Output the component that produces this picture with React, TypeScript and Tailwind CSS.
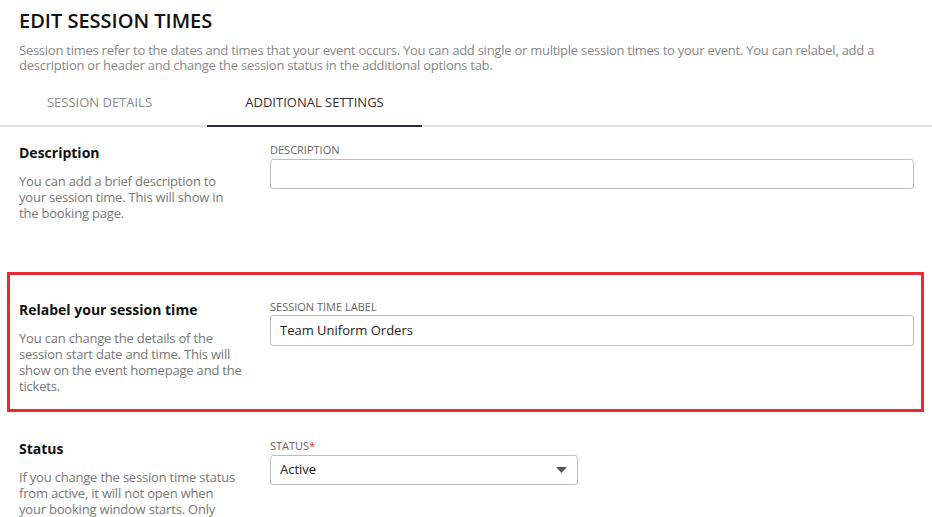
import React from 'react';

const font = { fontFamily: '"Open Sans", "Noto Sans", sans-serif' };

const SectionRow: React.FC<{ title: string; text: string; children: React.ReactNode }> = ({ title, text, children }) => (
  <div className="grid grid-cols-[232px_1fr] gap-x-[19px]">
    <div>
      <h2 className="text-[14px] font-bold leading-[20px] text-[#111]">{title}</h2>
      <p className="mt-[10px] max-w-[223px] text-[13px] leading-[16px] tracking-[-0.2px] text-[#777]">{text}</p>
    </div>
    <div>{children}</div>
  </div>
);

const FieldLabel: React.FC<{ children: React.ReactNode }> = ({ children }) => (
  <div className="text-[11px] leading-[14px] text-[#666] uppercase">{children}</div>
);

const App: React.FC = () => {
  return (
    <div className="w-[932px] h-[517px] overflow-hidden bg-white" style={font}>
      {/* Header */}
      <div className="px-[19px] pt-[8px]">
        <h1 className="text-[20px] font-semibold leading-[26px] text-[#111]">EDIT SESSION TIMES</h1>
        <p className="mt-[9px] text-[13px] leading-[15px] tracking-[-0.25px] text-[#888]">
          Session times refer to the dates and times that your event occurs. You can add single or multiple session times to your event. You can relabel, add a description or header and change the session status in the additional options tab.
        </p>
      </div>

      {/* Tabs */}
      <div className="mt-[10px] flex border-b-2 border-[#e2e2e2]">
        <button className="w-[207px] pr-[8px] pt-[11px] pb-[15px] text-center text-[13px] leading-[16px] text-[#8a8a8a] uppercase">
          Session Details
        </button>
        <button className="-mb-[2px] w-[215px] pt-[11px] pb-[15px] text-center text-[13px] leading-[16px] text-[#333] uppercase border-b-2 border-[#2b2651]">
          Additional Settings
        </button>
      </div>

      <div className="pl-[19px] pr-[18px]">
        {/* Description */}
        <div className="pt-[16px] pb-[51px]">
          <SectionRow
            title="Description"
            text="You can add a brief description to your session time. This will show in the booking page."
          >
            <FieldLabel>Description</FieldLabel>
            <div className="mt-[2px] h-[30px] rounded-[3px] border border-[#bdbdbd]" />
          </SectionRow>
        </div>

        {/* Relabel - highlighted */}
        <div className="-ml-[12px] -mr-[10px] border-[3px] border-[#ea2a31] pl-[9px] pr-[7px] pt-[25px] pb-[15px]">
          <SectionRow
            title="Relabel your session time"
            text="You can change the details of the session start date and time. This will show on the event homepage and the tickets."
          >
            <FieldLabel>Session Time Label</FieldLabel>
            <div className="mt-[1px] flex h-[31px] items-center rounded-[3px] border border-[#bdbdbd] px-[9px] text-[13px] text-[#222]">
              Team Uniform Orders
            </div>
          </SectionRow>
        </div>

        {/* Status */}
        <div className="pt-[27px]">
          <SectionRow
            title="Status"
            text="If you change the session time status from active, it will not open when your booking window starts. Only"
          >
            <FieldLabel>
              Status<span className="text-[#e3262d]">*</span>
            </FieldLabel>
            <div className="mt-[2px] flex h-[30px] w-[308px] items-center justify-between rounded-[3px] border border-[#bdbdbd] pl-[9px] pr-[10px] text-[13px] text-[#222]">
              <span>Active</span>
              <svg width="11" height="6" viewBox="0 0 11 6">
                <path d="M0 0 H11 L5.5 6 Z" fill="#555" />
              </svg>
            </div>
          </SectionRow>
        </div>
      </div>
    </div>
  );
};

export default App;
